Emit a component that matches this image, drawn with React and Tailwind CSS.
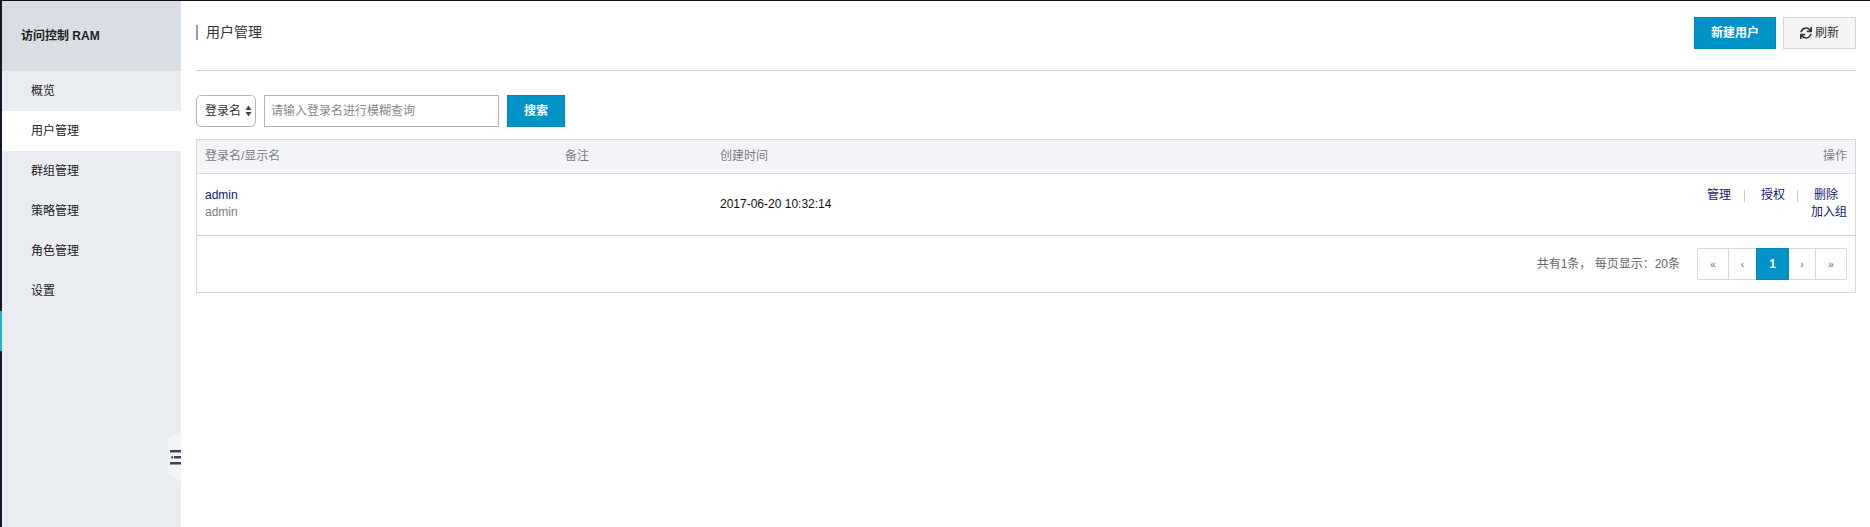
import React from "react";
import { FaSync } from "react-icons/fa";

const font = "font-['Liberation_Sans','Noto_Sans_CJK_SC',sans-serif]";
const navItems = ["概览", "用户管理", "群组管理", "策略管理", "角色管理", "设置"];

const pages = [
  { t: "«", w: "w-[32px]" },
  { t: "‹", w: "w-[29px]" },
  { t: "1", w: "w-[33px]", active: true },
  { t: "›", w: "w-[28px]" },
  { t: "»", w: "w-[32px]" },
];

export default function App() {
  return (
    <div className={`${font} flex h-[527px] w-full flex-col overflow-hidden bg-white text-[12px] text-[#222]`}>
      <div className="h-px w-full shrink-0 bg-[#111]" />
      <div className="flex min-h-0 flex-1">
        <div className="flex w-[2px] shrink-0 flex-col">
          <div className="h-[310px] bg-[#15182a]" />
          <div className="h-10 bg-[#1fb6c9]" />
          <div className="flex-1 bg-[#15182a]" />
        </div>
        <aside className="relative flex w-[179px] shrink-0 flex-col bg-[#e9ecf1]">
          <div className="flex h-[70px] shrink-0 items-center bg-[#d9dee4] pl-[19px] font-bold text-[12px] text-[#222]">访问控制 RAM</div>
          {navItems.map((t, i) => (
            <div key={t} className={`flex h-10 shrink-0 items-center pl-[29px] text-[12px] ${i === 1 ? "bg-white" : ""}`}>{t}</div>
          ))}
          <div className="absolute right-0 top-[431px] flex h-[50px] w-[13px] items-center justify-end bg-[#f3f4f6] [clip-path:polygon(100%_0,100%_100%,0_82%,0_12%)]">
            <svg width="11" height="15" viewBox="0 0 11 15">
              <rect x="0" y="0" width="11" height="2.5" fill="#3b4257" />
              <rect x="4" y="6" width="7" height="2.5" fill="#3b4257" />
              <path d="M0.5 7.2 L3 5.4 L3 9 Z" fill="#3b4257" />
              <rect x="0" y="12" width="11" height="2.5" fill="#3b4257" />
            </svg>
          </div>
        </aside>
        <main className="flex min-w-0 flex-1 flex-col pl-[15px] pr-[14px]">
          <div className="flex h-[70px] shrink-0 items-start justify-between border-b border-[#d0d0d0]">
            <div className="mt-6 flex h-[15px] items-center border-l-2 border-[#7ea2c8] pl-2 text-[14px] text-[#333]">用户管理</div>
            <div className="mt-4 flex gap-[7px]">
              <button className="h-8 w-[82px] border border-[#0087b8] bg-[#0093c8] font-bold text-white">新建用户</button>
              <button className="flex h-[32px] w-[73px] items-center justify-center gap-[3px] border border-[#d5d5d5] bg-[#f5f5f5] text-[#333]">
                <FaSync size={12} />刷新
              </button>
            </div>
          </div>
          <div className="mt-6 flex h-8 shrink-0 gap-2">
            <div className="flex w-[60px] items-center justify-between rounded-[5px] border border-[#b5b5b5] pl-[8px] pr-[3px] text-[#333]">
              登录名
              <svg width="7" height="12" viewBox="0 0 7 12"><path d="M3.5 0.5 L6.5 5 H0.5 Z M3.5 11.5 L0.5 7 H6.5 Z" fill="#444" /></svg>
            </div>
            <div className="flex w-[235px] items-center border border-[#b5b5b5] px-[6px] text-[#8a8a8a]">请输入登录名进行模糊查询</div>
            <button className="w-[58px] border border-[#0087b8] bg-[#0093c8] font-bold text-white">搜索</button>
          </div>
          <div className="mt-[12px] flex flex-col border border-[#d8d8d8]">
            <div className="flex h-[34px] items-center border-b border-[#dcdcdc] bg-[#f4f5f9] px-2 pb-[2px] text-[#7d7d7d]">
              <div className="w-[360px]">登录名/显示名</div>
              <div className="w-[155px]">备注</div>
              <div className="flex-1">创建时间</div>
              <div>操作</div>
            </div>
            <div className="flex h-[62px] items-start border-b border-[#d4d4d4] px-2">
              <div className="mt-[13px] w-[360px] leading-[17px]">
                <div className="text-[#12206e]">admin</div>
                <div className="text-[#7d7d7d]">admin</div>
              </div>
              <div className="w-[155px]" />
              <div className="mt-[21px] flex-1 text-[#111]">2017-06-20 10:32:14</div>
              <div className="mt-[13px] flex flex-col items-end leading-[17px] text-[#12206e]">
                <div className="mr-[9px] flex items-center">
                  <span>管理</span><span className="ml-[13px] mr-[16px] h-3 w-px bg-[#ccc]" />
                  <span>授权</span><span className="ml-[12px] mr-[16px] h-3 w-px bg-[#ccc]" />
                  <span>删除</span>
                </div>
                <div>加入组</div>
              </div>
            </div>
            <div className="flex h-[56px] items-center justify-end pr-2 text-[#666]">
              <span className="mr-[17px]">共有1条， 每页显示：20条</span>
              <div className="flex pl-px">
                {pages.map((p) => (
                  <div key={p.t} className={`-ml-px flex h-8 items-center justify-center border ${p.w} ${p.active ? "z-10 border-[#0087b8] bg-[#0093c8] text-[12px] font-bold text-white" : "border-[#d5d8dc] text-[10px] text-[#666]"}`}>{p.t}</div>
                ))}
              </div>
            </div>
          </div>
        </main>
      </div>
    </div>
  );
}
